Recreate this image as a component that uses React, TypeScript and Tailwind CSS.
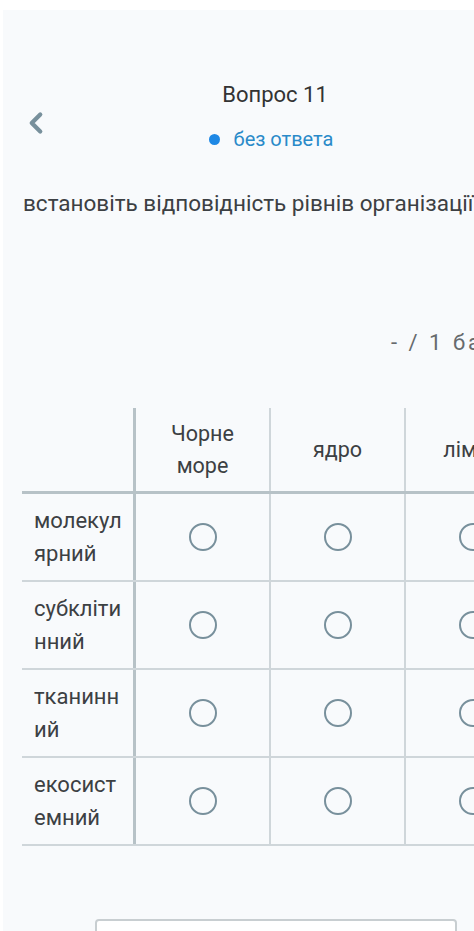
import { ChevronLeft } from 'lucide-react';

const columns = [['Чорне', 'море'], ['ядро'], ['лімон']];
const rows = [
    ['молекул', 'ярний'],
    ['субкліти', 'нний'],
    ['тканинн', 'ий'],
    ['екосист', 'емний'],
];

function Radio() {
    return <span className="block w-[28px] h-[28px] rounded-full border-[2.5px] border-[#78909c]" />;
}

export default function App() {
    return (
        <div className="w-[474px] h-[931px] overflow-hidden bg-white" style={{ fontFamily: 'Roboto, "Noto Sans", sans-serif' }}>
            <div className="mt-[10px] ml-[3px] w-[560px] h-[921px] bg-[#f8fafc] relative">
                {/* header */}
                <div className="relative pt-[70px] w-[544px] flex flex-col items-center">
                    <button className="absolute left-[16px] top-[96px] text-[#78909c]">
                        <ChevronLeft size={34} strokeWidth={3} />
                    </button>
                    <h1 className="text-[22px] leading-[30px] text-[#333333]">Вопрос 11</h1>
                    <div className="mt-[16px] flex items-center gap-[14px] -ml-[8px]">
                        <span className="w-[11px] h-[11px] rounded-full bg-[#1e88e5]" />
                        <span className="text-[20px] leading-[26px] text-[#2a8ac9]">без ответа</span>
                    </div>
                </div>

                <p className="mt-[36px] pl-[20px] text-[22.5px] leading-[30px] text-[#3c4043] whitespace-nowrap">
                    встановіть відповідність рівнів організації живої природи
                </p>

                <div className="mt-[110px] pl-[388px] text-[22px] leading-[30px] text-[#666a6d] whitespace-nowrap tracking-[3px]">
                    - / 1 бал
                </div>

                {/* table */}
                <div className="mt-[50px] ml-[19px] flex flex-col">
                    <div className="flex h-[86px] border-b-[3px] border-[#b7c2c7]">
                        <div className="w-[114px] border-r-[3px] border-[#b7c2c7]" />
                        {columns.map((c, i) => (
                            <div key={i} className="w-[135px] shrink-0 border-r-2 border-[#cfd6da] flex flex-col items-center justify-center text-[21.5px] leading-[32px] text-[#3c4043]">
                                {c.map((l) => (
                                    <span key={l}>{l}</span>
                                ))}
                            </div>
                        ))}
                    </div>
                    {rows.map((r, i) => (
                        <div key={i} className="flex h-[88px] border-b-2 border-[#cfd6da]">
                            <div className="w-[114px] border-r-[3px] border-[#b7c2c7] pl-[12px] flex flex-col justify-center text-[22px] leading-[33px] text-[#3c4043]">
                                {r.map((l) => (
                                    <span key={l}>{l}</span>
                                ))}
                            </div>
                            {columns.map((_, j) => (
                                <div key={j} className="w-[135px] shrink-0 border-r-2 border-[#cfd6da] flex items-center justify-center">
                                    <Radio />
                                </div>
                            ))}
                        </div>
                    ))}
                </div>

                <div className="absolute left-[92px] top-[909px] w-[362px] h-[40px] bg-white border-2 border-[#c8ced1] rounded-[4px]" />
            </div>
        </div>
    );
}
